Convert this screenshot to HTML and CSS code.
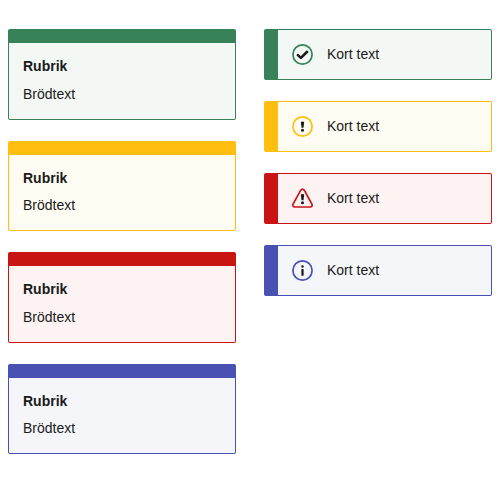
FILE: index.html
```
<!DOCTYPE html>
<html lang="sv">
<head>
<meta charset="utf-8">
<title>Meddelanden</title>
<link rel="stylesheet" href="styles.css">
</head>
<body>
<main class="columns">
  <section class="column">
    <article class="card success"><h2>Rubrik</h2><p>Brödtext</p></article>
    <article class="card warning"><h2>Rubrik</h2><p>Brödtext</p></article>
    <article class="card error"><h2>Rubrik</h2><p>Brödtext</p></article>
    <article class="card info"><h2>Rubrik</h2><p>Brödtext</p></article>
  </section>
  <section class="column">
    <div class="alert success">
      <svg class="icon" viewBox="0 0 21 21"><circle class="ring" cx="10.5" cy="10.5" r="9.6"/><path class="tick" d="M5.9 11.1l3 2.8 6.2-6.1"/></svg>
      <p>Kort text</p>
    </div>
    <div class="alert warning">
      <svg class="icon" viewBox="0 0 21 21"><circle class="ring" cx="10.5" cy="10.5" r="9.6"/><path class="glyph" d="M8.9 6.6Q8.9 5.6 10.5 5.6T12.1 6.6L11.5 11.8h-2z"/><circle class="glyph" cx="10.5" cy="14.3" r="1.5"/></svg>
      <p>Kort text</p>
    </div>
    <div class="alert error">
      <svg class="icon" viewBox="0 0 21 21"><path class="ring" d="M8.6 2.4Q10.5-.2 12.4 2.4L19.8 15.8Q21 18.8 18 19H3Q0 18.8 1.2 15.8Z"/><path class="glyph" d="M8.9 7Q8.9 6 10.5 6T12.1 7L11.5 12.2h-2z"/><circle class="glyph" cx="10.5" cy="14.7" r="1.5"/></svg>
      <p>Kort text</p>
    </div>
    <div class="alert info">
      <svg class="icon" viewBox="0 0 21 21"><circle class="ring" cx="10.5" cy="10.5" r="9.6"/><circle class="glyph" cx="10.5" cy="6.5" r="1.2"/><path class="glyph" d="M9.4 9h2.2v6.7H9.4z"/></svg>
      <p>Kort text</p>
    </div>
  </section>
</main>
</body>
</html>
```
FILE: styles.css
```
* { box-sizing: border-box; }
body { margin: 0; background: #fff; color: #1a1a1a; font: 14px/20px "Liberation Sans", Arial, sans-serif; }
h2, p { margin: 0; font-size: 14px; line-height: 20px; }
.columns { display: grid; grid-template-columns: 228px 228px; gap: 28px; padding: 29px 8px 0; align-items: start; }
.column { display: grid; gap: 21px; }
.card { height: 90.6px; padding: 13px 14px; border: 1px solid var(--accent); border-top-width: 14px; border-radius: 2px; background: var(--tint); }
.card p { margin-top: 7.6px; }
.alert { display: flex; align-items: flex-start; height: 51px; padding: 14px 14px 0; border: 1px solid var(--accent); border-left-width: 14px; border-radius: 2px; background: var(--tint); }
.icon { flex: none; width: 21px; height: 21px; margin-right: 14px; }
.ring { fill: none; stroke: var(--accent); stroke-width: 1.7; }
.tick { fill: none; stroke: #1a1a1a; stroke-width: 2.6; stroke-linecap: round; stroke-linejoin: round; }
.glyph { fill: #1a1a1a; }
.success { --accent: #378259; --tint: #f3f8f5; }
.warning { --accent: #ffbe10; --tint: #fffcf3; }
.error { --accent: #c91414; --tint: #fcf3f2; }
.info { --accent: #4951b3; --tint: #f5f6fa; }
```
